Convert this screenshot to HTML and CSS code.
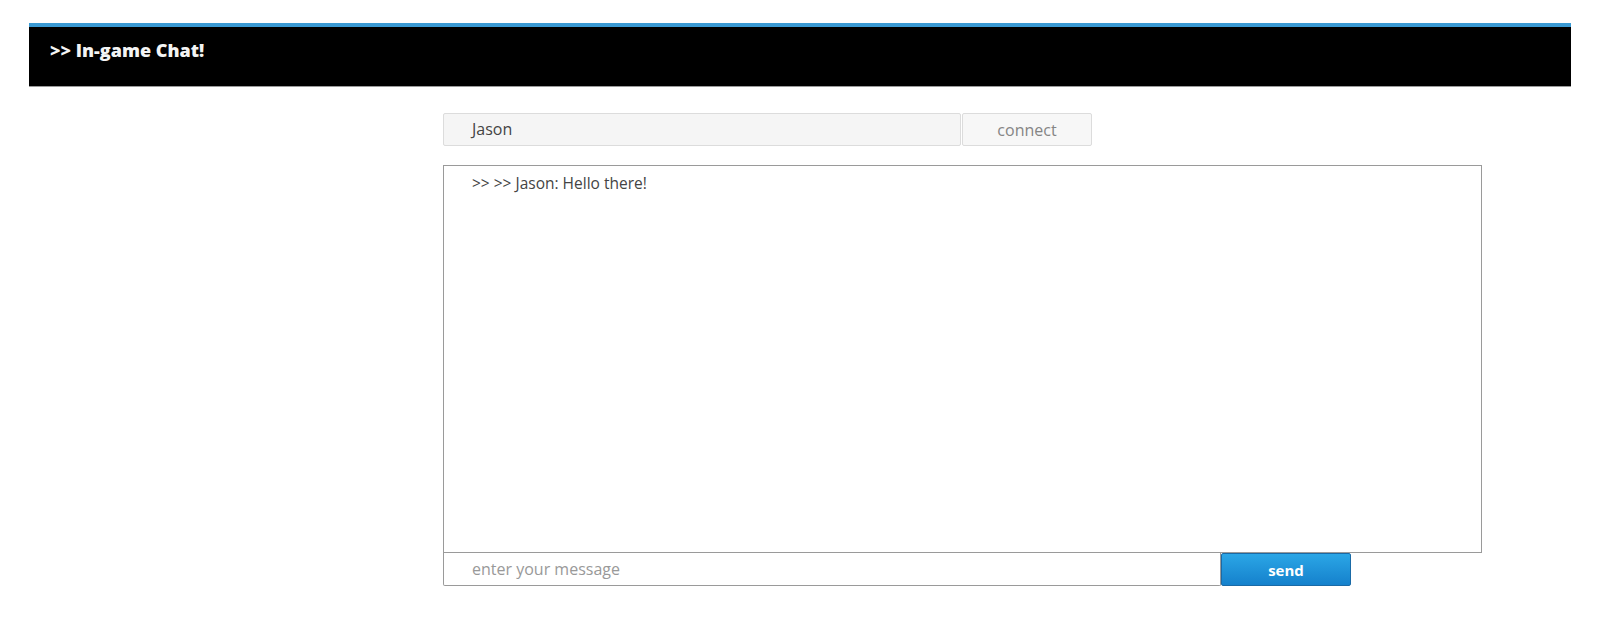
FILE: index.html
```html
<!DOCTYPE html>
<html>
<head>
<meta charset="utf-8">
<link rel="stylesheet" href="styles.css">
</head>
<body>
<div class="page">
  <header class="topbar">
    <h1 class="title">&gt;&gt; In-game Chat!</h1>
  </header>
  <main class="chat">
    <div class="row">
      <div class="field name-field">Jason</div>
      <button class="btn connect">connect</button>
    </div>
    <div class="log">
      <div class="msg">&gt;&gt; &gt;&gt; Jason: Hello there!</div>
    </div>
    <div class="row">
      <div class="field msg-field">enter your message</div>
      <button class="btn send">send</button>
    </div>
  </main>
</div>
</body>
</html>
```
FILE: styles.css
```css
* { box-sizing: border-box; }
html, body { margin: 0; padding: 0; background: #fff; }
body { font-family: "Open Sans", "Liberation Sans", sans-serif; }
.page { padding: 23px 29px 0; }
.topbar {
  background: #000;
  border-top: 4px solid #3a9ad4;
  border-bottom: 1px solid #9a9a9a;
  height: 64px;
  padding: 0 21px;
  display: flex;
  align-items: flex-start;
}
.title {
  margin: 0;
  padding-top: 11px;
  color: #f4f4f4;
  font-size: 18px;
  font-weight: 800;
  line-height: 24px;
}
.chat {
  margin-left: 414px;
  width: 1039px;
  padding-top: 26px;
}
.row { display: flex; }
.field {
  height: 33px;
  line-height: 31px;
  padding-left: 28px;
  font-size: 16px;
}
.name-field {
  width: 518px;
  background: #f5f5f5;
  border: 1px solid #dcdcdc;
  border-radius: 2px;
  color: #444;
}
.btn {
  font-family: inherit;
  margin: 0;
  cursor: pointer;
}
.connect {
  width: 130px;
  height: 33px;
  margin-left: 1px;
  background: #f7f7f7;
  border: 1px solid #dcdcdc;
  border-radius: 2px;
  color: #858585;
  font-size: 16px;
}
.log {
  margin-top: 19px;
  height: 388px;
  border: 1px solid #9a9a9a;
  padding: 6px 28px;
}
.msg { font-size: 15.5px; color: #444; line-height: 22px; }
.msg-field {
  width: 778px;
  border: 1px solid #9a9a9a;
  border-top: none;
  border-radius: 0 0 2px 2px;
  color: #999;
  height: 33px;
  line-height: 32px;
}
.send {
  width: 130px;
  height: 33px;
  background: linear-gradient(#2ba6e6, #1581cc);
  border: 1px solid #1a6aa6;
  border-radius: 2px;
  color: #fff;
  font-weight: 700;
  font-size: 15px;
}
```
